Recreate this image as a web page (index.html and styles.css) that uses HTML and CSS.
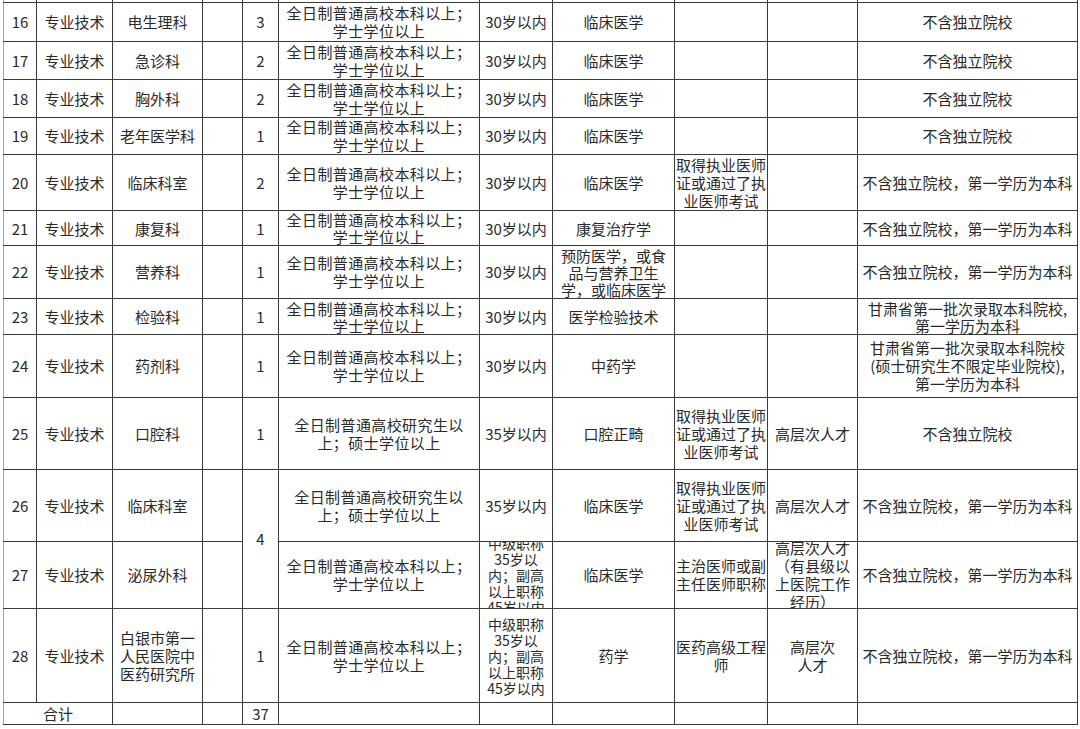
FILE: index.html
```html
<!DOCTYPE html>
<html lang="zh-CN">
<head>
<meta charset="utf-8">
<title>招聘岗位表</title>
<link rel="stylesheet" href="styles.css">
</head>
<body>
<div class="sheet">
<table class="grid">
<colgroup>
<col class="c-no"><col class="c-type"><col class="c-dept"><col class="c-blank"><col class="c-num"><col class="c-edu"><col class="c-age"><col class="c-major"><col class="c-other"><col class="c-talent"><col class="c-note">
</colgroup>
<tbody>
<tr class="r-stub"><td></td><td></td><td></td><td></td><td></td><td></td><td></td><td></td><td></td><td></td><td></td></tr>
<tr class="r39"><td>16</td><td>专业技术</td><td>电生理科</td><td></td><td>3</td><td class="edu">全日制普通高校本科以上；<br>学士学位以上</td><td>30岁以内</td><td>临床医学</td><td></td><td></td><td>不含独立院校</td></tr>
<tr class="r38"><td>17</td><td>专业技术</td><td>急诊科</td><td></td><td>2</td><td class="edu">全日制普通高校本科以上；<br>学士学位以上</td><td>30岁以内</td><td>临床医学</td><td></td><td></td><td>不含独立院校</td></tr>
<tr class="r38"><td>18</td><td>专业技术</td><td>胸外科</td><td></td><td>2</td><td class="edu">全日制普通高校本科以上；<br>学士学位以上</td><td>30岁以内</td><td>临床医学</td><td></td><td></td><td>不含独立院校</td></tr>
<tr class="r37"><td>19</td><td>专业技术</td><td>老年医学科</td><td></td><td>1</td><td class="edu">全日制普通高校本科以上；<br>学士学位以上</td><td>30岁以内</td><td>临床医学</td><td></td><td></td><td>不含独立院校</td></tr>
<tr class="r56"><td>20</td><td>专业技术</td><td>临床科室</td><td></td><td>2</td><td class="edu">全日制普通高校本科以上；<br>学士学位以上</td><td>30岁以内</td><td>临床医学</td><td>取得执业医师<br>证或通过了执<br>业医师考试</td><td></td><td>不含独立院校，第一学历为本科</td></tr>
<tr class="r35 tight"><td>21</td><td>专业技术</td><td>康复科</td><td></td><td>1</td><td class="edu">全日制普通高校本科以上；<br>学士学位以上</td><td>30岁以内</td><td>康复治疗学</td><td></td><td></td><td>不含独立院校，第一学历为本科</td></tr>
<tr class="r53"><td>22</td><td>专业技术</td><td>营养科</td><td></td><td>1</td><td class="edu">全日制普通高校本科以上；<br>学士学位以上</td><td>30岁以内</td><td class="lh17">预防医学，或食<br>品与营养卫生<br>学，或临床医学</td><td></td><td></td><td>不含独立院校，第一学历为本科</td></tr>
<tr class="r36 tight"><td>23</td><td>专业技术</td><td>检验科</td><td></td><td>1</td><td class="edu">全日制普通高校本科以上；<br>学士学位以上</td><td>30岁以内</td><td>医学检验技术</td><td></td><td></td><td>甘肃省第一批次录取本科院校,<br>第一学历为本科</td></tr>
<tr class="r63"><td>24</td><td>专业技术</td><td>药剂科</td><td></td><td>1</td><td class="edu">全日制普通高校本科以上；<br>学士学位以上</td><td>30岁以内</td><td>中药学</td><td></td><td></td><td>甘肃省第一批次录取本科院校<br>(硕士研究生不限定毕业院校),<br>第一学历为本科</td></tr>
<tr class="r72"><td>25</td><td>专业技术</td><td>口腔科</td><td></td><td>1</td><td class="edu">全日制普通高校研究生以<br>上；硕士学位以上</td><td>35岁以内</td><td>口腔正畸</td><td>取得执业医师<br>证或通过了执<br>业医师考试</td><td>高层次人才</td><td>不含独立院校</td></tr>
<tr class="r72"><td>26</td><td>专业技术</td><td>临床科室</td><td></td><td rowspan="2">4</td><td class="edu">全日制普通高校研究生以<br>上；硕士学位以上</td><td>35岁以内</td><td>临床医学</td><td>取得执业医师<br>证或通过了执<br>业医师考试</td><td>高层次人才</td><td>不含独立院校，第一学历为本科</td></tr>
<tr class="r67"><td>27</td><td>专业技术</td><td>泌尿外科</td><td></td><td class="edu">全日制普通高校本科以上；<br>学士学位以上</td><td class="small"><div class="clip"><span>中级职称<br>35岁以<br>内；副高<br>以上职称<br>45岁以内</span></div></td><td>临床医学</td><td>主治医师或副<br>主任医师职称</td><td><div class="clip"><span>高层次人才<br>（有县级以<br>上医院工作<br>经历）</span></div></td><td>不含独立院校，第一学历为本科</td></tr>
<tr class="r94"><td>28</td><td>专业技术</td><td>白银市第一<br>人民医院中<br>医药研究所</td><td></td><td>1</td><td class="edu">全日制普通高校本科以上；<br>学士学位以上</td><td class="small">中级职称<br>35岁以<br>内；副高<br>以上职称<br>45岁以内</td><td>药学</td><td>医药高级工程<br>师</td><td>高层次<br>人才</td><td>不含独立院校，第一学历为本科</td></tr>
<tr class="r22"><td colspan="2">合计</td><td></td><td></td><td>37</td><td></td><td></td><td></td><td></td><td></td><td></td></tr>
</tbody>
</table>
</div>
</body>
</html>
```

FILE: styles.css
```css
html, body {
  margin: 0;
  padding: 0;
  background: #ffffff;
}

.sheet {
  width: 1080px;
  height: 729px;
  overflow: hidden;
  padding-left: 3px;
  box-sizing: border-box;
}

.grid {
  table-layout: fixed;
  border-collapse: collapse;
  width: 1075px;
  margin-top: -20px;
  font-family: "Noto Sans CJK SC", "Noto Sans", sans-serif;
  font-size: 15px;
  line-height: 18px;
  color: #2a2a2a;
}

.grid td {
  border: 1px solid #3a3a3a;
  padding: 0;
  text-align: center;
  vertical-align: middle;
  white-space: nowrap;
  overflow: hidden;
}

.grid tr > td:first-child {
  border-left-color: #a8a8a8;
}

.c-no { width: 33px; }
.c-type { width: 76px; }
.c-dept { width: 90px; }
.c-blank { width: 40px; }
.c-num { width: 36px; }
.c-edu { width: 201px; }
.c-age { width: 73px; }
.c-major { width: 122px; }
.c-other { width: 93px; }
.c-talent { width: 90px; }
.c-note { width: 220px; }

.r-stub { height: 22px; }
.r22 { height: 22px; }
.r35 { height: 35px; }
.r36 { height: 36px; }
.r37 { height: 37px; }
.r38 { height: 38px; }
.r39 { height: 39px; }
.r53 { height: 53px; }
.r56 { height: 56px; }
.r63 { height: 63px; }
.r67 { height: 67px; }
.r72 { height: 72px; }
.r94 { height: 94px; }

.tight td { line-height: 17px; }
.lh17 { line-height: 17px; }

.edu { letter-spacing: 0.4px; }

.small {
  font-size: 14px;
  line-height: 16px;
}

.clip {
  height: 66px;
  display: flex;
  align-items: center;
  justify-content: center;
  overflow: hidden;
}

.clip > span {
  display: block;
}
```
